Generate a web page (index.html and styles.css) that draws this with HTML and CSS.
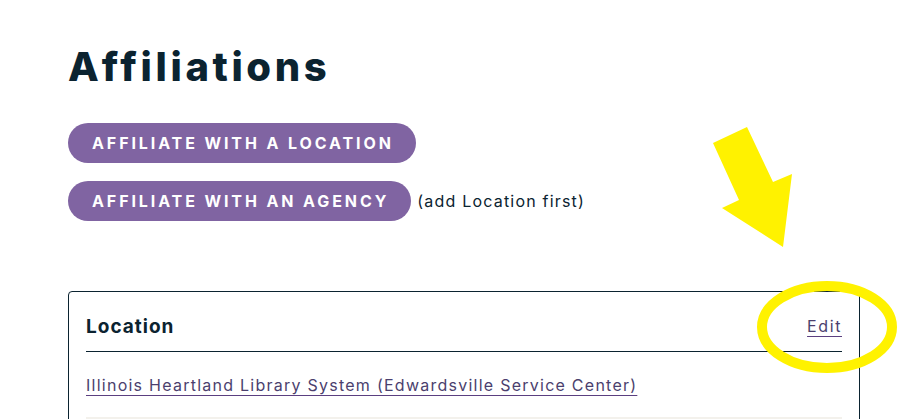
FILE: index.html
```html
<!DOCTYPE html>
<html lang="en">
<head>
<meta charset="utf-8">
<title>Affiliations</title>
<link rel="stylesheet" href="styles.css">
</head>
<body>
<main class="page">
  <h1 class="title">Affiliations</h1>
  <div class="actions">
    <div class="action-row">
      <button class="pill-btn" type="button">Affiliate with a Location</button>
    </div>
    <div class="action-row">
      <button class="pill-btn" type="button">Affiliate with an Agency</button>
      <span class="hint">(add Location first)</span>
    </div>
  </div>
  <section class="card">
    <div class="card-header">
      <h2 class="card-title">Location</h2>
      <a class="edit-link" href="#">Edit</a>
    </div>
    <div class="card-body">
      <a class="item-link" href="#">Illinois Heartland Library System (Edwardsville Service Center)</a>
    </div>
    <div class="card-row-alt"></div>
  </section>
</main>
<svg class="annotation" width="922" height="419" viewBox="0 0 922 419" aria-hidden="true">
  <polygon points="713,143 747,127 773,182 792,174 783,247 722,208 739,200" fill="#fff200"/>
  <ellipse cx="827" cy="327" rx="65" ry="41" fill="none" stroke="#fff200" stroke-width="10"/>
</svg>
</body>
</html>
```
FILE: styles.css
```css
html, body {
  margin: 0;
  padding: 0;
  background: #ffffff;
}

body {
  font-family: Inter, "Liberation Sans", sans-serif;
  color: #0b2330;
  position: relative;
  width: 922px;
  height: 419px;
  overflow: hidden;
}

.page {
  padding: 40px 62px 0 68px;
}

.title {
  margin: 0;
  font-size: 40px;
  line-height: 54px;
  font-weight: 800;
  letter-spacing: 3.6px;
  color: #0b2330;
}

.actions {
  margin-top: 29px;
  display: flex;
  flex-direction: column;
  gap: 18px;
}

.action-row {
  display: flex;
  align-items: center;
  gap: 6px;
}

.pill-btn {
  height: 40px;
  padding: 0 22px 0 24px;
  border: none;
  border-radius: 20px;
  background: #8064a2;
  color: #ffffff;
  font-family: Inter, "Liberation Sans", sans-serif;
  font-size: 16px;
  font-weight: 700;
  letter-spacing: 2.9px;
  text-transform: uppercase;
}

.hint {
  font-size: 16px;
  letter-spacing: 1.2px;
  color: #0b2330;
}

.card {
  margin-top: 70px;
  border: 1px solid #0b2330;
  border-radius: 4px;
  padding: 20px 17px 0 17px;
}

.card-header {
  display: flex;
  justify-content: space-between;
  align-items: center;
  padding-bottom: 11px;
  border-bottom: 1px solid #0b2330;
  height: 28px;
}

.card-title {
  margin: 0;
  font-size: 19px;
  font-weight: 700;
  letter-spacing: 1px;
  color: #0b2330;
}

.edit-link {
  font-size: 16px;
  letter-spacing: 1.6px;
  color: #4b3f6e;
  text-decoration: underline;
  text-decoration-color: #5b3f80;
  text-underline-offset: 4px;
}

.card-body {
  padding: 21px 0 20px;
  line-height: 24px;
}

.item-link {
  font-size: 16px;
  letter-spacing: 1.25px;
  color: #4b3f6e;
  text-decoration: underline;
  text-decoration-color: #5b3f80;
  text-underline-offset: 4px;
}

.card-row-alt {
  height: 40px;
  background: #f3f1ec;
}

.annotation {
  position: absolute;
  top: 0;
  left: 0;
  pointer-events: none;
}
```
